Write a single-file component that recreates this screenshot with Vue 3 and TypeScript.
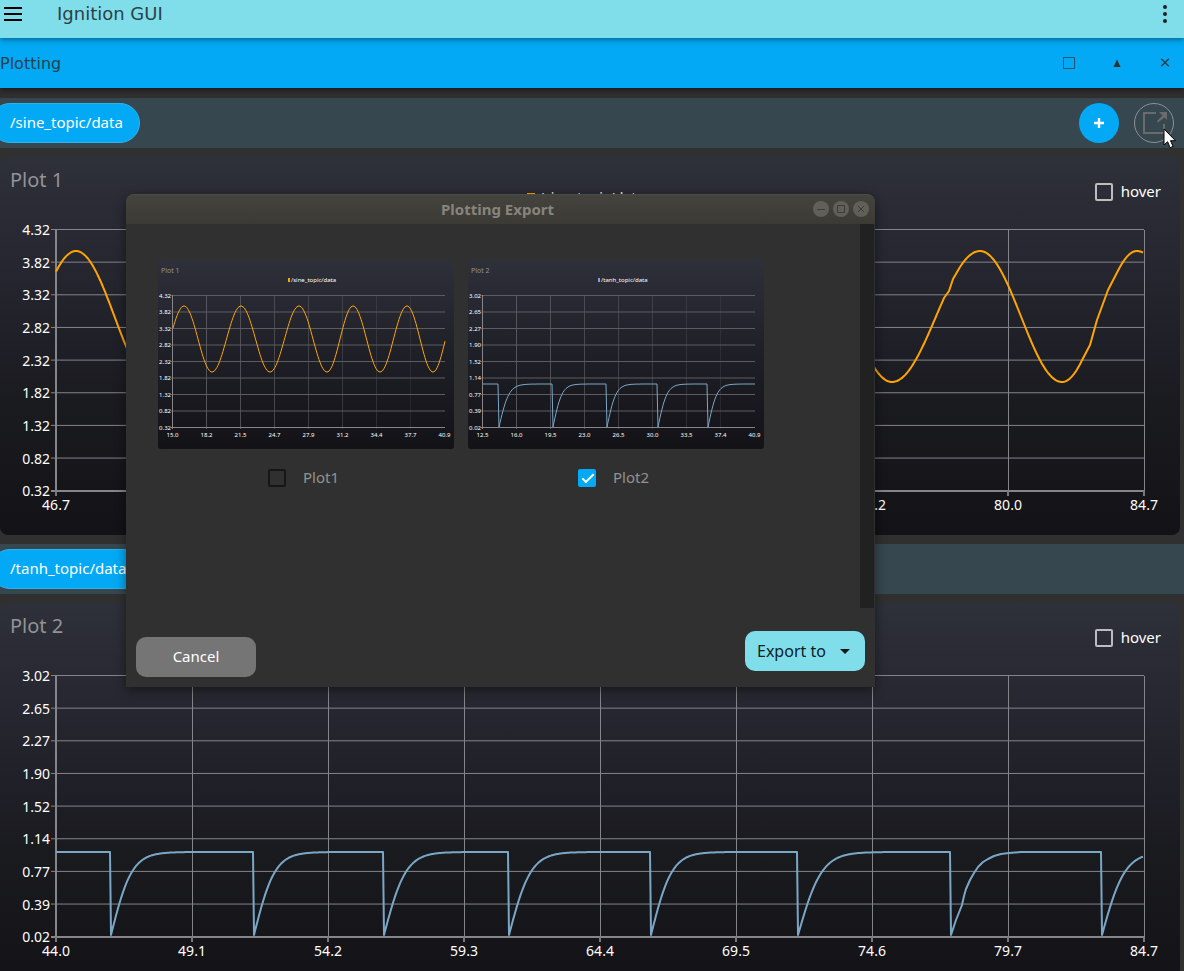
<script setup lang="ts">
import { ref } from 'vue'

type Point = [number, number]

interface Frame {
  width: number
  height: number
  left: number
  top: number
  stepX: number
  stepY: number
}

interface Chart {
  title: string
  topic: string
  color: string
  yLabels: string[]
  xLabels: string[]
  path: string
}

const linear = (pts: Point[]): string =>
  pts.map(([x, y], i) => `${i ? 'L' : 'M'}${x.toFixed(1)} ${y.toFixed(1)}`).join(' ')

/** Sine samples between alternating extremes, starting with a peak. */
function wave(extremes: number[], high: number, low: number, from: number, to: number): Point[] {
  const mid = (high + low) / 2
  const amp = (low - high) / 2
  const out: Point[] = []
  for (let x = from; x <= to; x++) {
    let i = 0
    while (i < extremes.length - 2 && x > extremes[i + 1]) i++
    const t = (x - extremes[i]) / (extremes[i + 1] - extremes[i])
    const sign = i % 2 ? -1 : 1
    out.push([x, mid - sign * amp * Math.cos(Math.PI * t)])
  }
  return out
}

interface Drop {
  x: number
  k: number
  samples?: Point[]
}

/** Repeated tanh ramps that fall back to zero at each drop. */
function ramps(drops: Drop[], from: number, to: number, high: number, low: number): Point[] {
  const out: Point[] = [[from, high]]
  drops.forEach((drop, i) => {
    const end = i + 1 < drops.length ? drops[i + 1].x - 1 : to
    out.push([drop.x - 1, high])
    if (drop.samples) {
      out.push(...drop.samples.map(([dx, y]): Point => [drop.x + dx, y]))
      return
    }
    for (let dx = 0; drop.x + dx <= end && dx < drop.k * 4; dx++) {
      out.push([drop.x + dx, low - (low - high) * Math.tanh(dx / drop.k)])
    }
    if (end - drop.x > drop.k * 4) out.push([end, high])
  })
  return out
}

const mainFrame: Frame = { width: 1180, height: 318, left: 56, top: 13, stepX: 136, stepY: 32.65 }
const thumbFrame: Frame = { width: 296, height: 190, left: 14.5, top: 36.5, stepX: 34, stepY: 16.5 }

const extremes = [76, 153, 243, 333, 423, 513, 603, 700, 810, 892, 980, 1062, 1137, 1220]
const sine = (from: number, to: number): Point[] => wave(extremes, 34, 165, from, to)
const sineSamples: Point[] = [
  ...sine(56, 944), [949, 74], [953, 62], ...sine(960, 1082),
  [1090, 128], [1097, 103], [1108, 73], ...sine(1119, 1143),
]

const sineLabels = ['4.32', '3.82', '3.32', '2.82', '2.32', '1.82', '1.32', '0.82', '0.32']
const tanhLabels = ['3.02', '2.65', '2.27', '1.90', '1.52', '1.14', '0.77', '0.39', '0.02']

const charts: Chart[] = [
  {
    title: 'Plot 1',
    topic: '/sine_topic/data',
    color: '#ffa500',
    yLabels: sineLabels,
    xLabels: ['46.7', '51.5', '56.2', '61.0', '65.7', '70.5', '75.2', '80.0', '84.7'],
    path: linear(sineSamples),
  },
  {
    title: 'Plot 2',
    topic: '/tanh_topic/data',
    color: '#7ba7c7',
    yLabels: tanhLabels,
    xLabels: ['44.0', '49.1', '54.2', '59.3', '64.4', '69.5', '74.6', '79.7', '84.7'],
    path: linear(
      ramps(
        [
          { x: 111, k: 21 },
          { x: 254, k: 21 },
          { x: 384, k: 22 },
          { x: 509, k: 22 },
          { x: 651, k: 21 },
          { x: 798, k: 24 },
          {
            x: 951,
            k: 24,
            samples: [[0, 272], [5, 257], [11, 242], [13, 233], [15, 226], [19, 217], [23, 210], [27, 204], [32, 199], [37, 196], [43, 193], [50, 191], [58, 190], [70, 189], [83, 189]],
          },
          { x: 1102, k: 23 },
        ],
        56, 1143, 189, 272,
      ),
    ),
  },
]

const previews: Chart[] = [
  {
    ...charts[0],
    xLabels: ['15.0', '18.2', '21.5', '24.7', '27.9', '31.2', '34.4', '37.7', '40.9'],
    path: linear(wave([26, 54, 83, 112, 141, 169, 195, 222, 249, 275, 300], 47, 113, 15, 287)),
  },
  {
    ...charts[1],
    xLabels: ['12.5', '16.0', '19.5', '23.0', '26.5', '30.0', '33.5', '37.4', '40.9'],
    path: linear(
      ramps([{ x: 31, k: 10 }, { x: 85, k: 9 }, { x: 139, k: 9 }, { x: 190, k: 9 }, { x: 240, k: 9 }], 15, 287, 125, 168),
    ),
  },
]

const nine = [0, 1, 2, 3, 4, 5, 6, 7, 8]
const hover = ref([false, false])
const selected = ref([false, true])
const format = ref('')
</script>

<template>
  <div class="app">
    <header class="app-bar">
      <button class="icon-button menu" aria-label="Menu">
        <svg width="18" height="14" viewBox="0 0 18 14"><path d="M0 1h18M0 7h18M0 13h18" stroke="#000" stroke-width="2" /></svg>
      </button>
      <h1>Ignition GUI</h1>
      <button class="icon-button more" aria-label="More options">
        <svg width="4" height="18" viewBox="0 0 4 18" fill="#212121"><circle cx="2" cy="2" r="2" /><circle cx="2" cy="9" r="2" /><circle cx="2" cy="16" r="2" /></svg>
      </button>
    </header>

    <section class="plugin-bar">
      <h2>Plotting</h2>
      <button class="icon-button" aria-label="Float">
        <svg width="12" height="12" viewBox="0 0 12 12"><rect x=".5" y=".5" width="11" height="11" fill="none" stroke="#1c5474" /></svg>
      </button>
      <button class="icon-button" aria-label="Collapse">
        <svg width="12" height="12" viewBox="0 0 12 12"><path d="M6 2.5 9.5 10h-7z" fill="#303030" /></svg>
      </button>
      <button class="icon-button" aria-label="Close">
        <svg width="12" height="12" viewBox="0 0 12 12"><path d="m2.200 1.700 7.600 7.600m0-7.600L2.200 9.300" stroke="#25404e" stroke-width="1.500" /></svg>
      </button>
    </section>

    <main>
      <template v-for="(chart, n) in charts" :key="chart.title">
        <div class="topic-bar">
          <button class="pill">{{ chart.topic }}</button>
          <template v-if="n === 0">
            <button class="round add" aria-label="Add plot">
              <svg width="10" height="10" viewBox="0 0 10 10"><path d="M5 0v10M0 5h10" stroke="#fff" stroke-width="2.400" /></svg>
            </button>
            <button class="round export" aria-label="Export plots">
              <svg width="24" height="24" viewBox="0 0 24 24">
                <path d="M14 2H2v20h20v-9" fill="none" stroke="#6b6b6b" stroke-width="2" />
                <path d="M25 1v8l-2.500-2.500-6.500 5-1-1.500 5.500-5.500L17 1z" fill="#6b6b6b" />
              </svg>
            </button>
          </template>
        </div>

        <article class="card">
          <div class="card-head">
            <h3>{{ chart.title }}</h3>
            <span class="legend"><svg width="8" height="8"><rect width="8" height="8" :fill="chart.color" /></svg>{{ chart.topic }}</span>
            <label class="hover"><input v-model="hover[n]" type="checkbox" /><span class="caption">hover</span></label>
          </div>
          <svg class="chart" :viewBox="`0 0 ${mainFrame.width} ${mainFrame.height}`" role="img" :aria-label="chart.title">
            <g stroke="#84858a">
              <line v-for="i in nine" :key="'h' + i" x1="51" x2="1144" :y1="mainFrame.top - .5 + i * mainFrame.stepY" :y2="mainFrame.top - .5 + i * mainFrame.stepY" />
              <line v-for="i in nine" :key="'v' + i" y1="13" y2="279" :x1="mainFrame.left + i * mainFrame.stepX + .5" :x2="mainFrame.left + i * mainFrame.stepX + .5" />
            </g>
            <path d="M56 12v267M51 274h1094" stroke="#85868a" stroke-width="2" fill="none" />
            <path v-for="i in nine" :key="'t' + i" :d="`M${mainFrame.left + i * mainFrame.stepX} 274v5`" stroke="#77787c" stroke-width="2" />
            <g fill="#fff" class="axis">
              <text v-for="(t, i) in chart.yLabels" :key="'y' + i" x="50" :y="18 + i * mainFrame.stepY" text-anchor="end">{{ t }}</text>
              <text v-for="(t, i) in chart.xLabels" :key="'x' + i" :x="mainFrame.left + i * mainFrame.stepX" y="293" text-anchor="middle">{{ t }}</text>
            </g>
            <path :d="chart.path" fill="none" :stroke="chart.color" stroke-width="2" stroke-linejoin="round" />
          </svg>
        </article>
      </template>
    </main>

    <div class="dialog" role="dialog" aria-label="Plotting Export">
      <div class="title-bar">
        <h2>Plotting Export</h2>
        <div class="window-buttons">
          <button aria-label="Minimize"><svg width="16" height="16" viewBox="0 0 16 16"><path d="M4 8.500h8" /></svg></button>
          <button aria-label="Maximize"><svg width="16" height="16" viewBox="0 0 16 16"><path d="M4.500 4.500h7v7h-7z" /></svg></button>
          <button aria-label="Close"><svg width="16" height="16" viewBox="0 0 16 16"><path d="m5 5 6 6m0-6-6 6" /></svg></button>
        </div>
      </div>
      <div class="dialog-body">
        <div class="previews">
          <div v-for="(p, n) in previews" :key="p.title" class="preview">
            <svg class="thumb" :viewBox="`0 0 ${thumbFrame.width} ${thumbFrame.height}`" role="img" :aria-label="p.title">
              <defs>
                <linearGradient :id="'shade' + n" x1="0" y1="0" x2="0" y2="1">
                  <stop offset="0" stop-color="#2e303a" />
                  <stop offset=".5" stop-color="#1f1f27" />
                  <stop offset="1" stop-color="#121217" />
                </linearGradient>
              </defs>
              <rect width="296" height="190" rx="3" :fill="`url(#shade${n})`" />
              <text x="3" y="14" class="thumb-title">{{ p.title }}</text>
              <rect x="130" y="19" width="2" height="4" :fill="p.color" />
              <text x="133" y="23" class="thumb-text">{{ p.topic }}</text>
              <g stroke="#5c5d62">
                <line v-for="i in nine" :key="'h' + i" x1="13" x2="287" :y1="thumbFrame.top + i * thumbFrame.stepY" :y2="thumbFrame.top + i * thumbFrame.stepY" />
                <line v-for="i in nine.slice(0, 8)" :key="'v' + i" y1="36" y2="170" :x1="thumbFrame.left + i * thumbFrame.stepX" :x2="thumbFrame.left + i * thumbFrame.stepX" :opacity="1 - i * .11" />
              </g>
              <path d="M14.5 36v134M13 168.500h274" stroke="#85868a" fill="none" />
              <text v-for="(t, i) in p.yLabels" :key="'y' + i" x="13" :y="38.5 + i * thumbFrame.stepY" text-anchor="end" class="thumb-text">{{ t }}</text>
              <text v-for="(t, i) in p.xLabels" :key="'x' + i" :x="thumbFrame.left + i * thumbFrame.stepX" y="178" text-anchor="middle" class="thumb-text">{{ t }}</text>
              <path :d="p.path" fill="none" :stroke="p.color" />
            </svg>
            <label class="choice"><input v-model="selected[n]" type="checkbox" /><span class="caption">Plot{{ n + 1 }}</span></label>
          </div>
        </div>
        <div class="scroll-track"></div>
      </div>
      <div class="dialog-foot">
        <button class="cancel">Cancel</button>
        <div class="export-to">
          <select v-model="format" aria-label="Export to">
            <option value="">Export to</option>
            <option value="csv">CSV</option>
            <option value="pdf">PDF</option>
          </select>
          <svg width="10" height="5" viewBox="0 0 10 5"><path d="M0 0h10L5 5z" fill="#0d1618" /></svg>
        </div>
      </div>
    </div>

    <svg class="pointer" width="14" height="22" viewBox="0 0 14 22">
      <path d="M1 1v16l3.600-3.300 2.500 6 3-1.300-2.600-5.700h5z" fill="#fff" stroke="#000" />
    </svg>
  </div>
</template>

<style>
html,
body {
  background: #303030;
}
</style>

<style scoped>
.app {
  position: relative;
  height: 100vh;
  overflow: hidden;
  background: #303030;
  color: #fff;
  font-family: "Noto Sans", "Open Sans", sans-serif;
  font-size: 15px;
}
.app *,
.app *::after {
  box-sizing: border-box;
}
h1,
h2,
h3 {
  margin: 0;
  font-weight: 400;
}
button,
select {
  margin: 0;
  padding: 0;
  border: 0;
  background: none;
  color: inherit;
  font: inherit;
}
svg {
  display: block;
}
.app-bar {
  position: relative;
  z-index: 2;
  display: flex;
  align-items: center;
  height: 38px;
  padding: 0 17px 10px 4px;
  background: #80deea;
  box-shadow: 0 1px 6px rgba(0, 0, 0, 0.5);
}
.app-bar h1 {
  flex: 1;
  margin-left: 35px;
  color: #2c4144;
  font: 18px/28px "DejaVu Sans", sans-serif;
}
.plugin-bar {
  position: relative;
  z-index: 1;
  display: flex;
  align-items: center;
  gap: 36px;
  height: 50px;
  padding-right: 13px;
  background: #03a9f4;
  box-shadow: 0 2px 6px rgba(0, 0, 0, 0.5);
}
.plugin-bar h2 {
  flex: 1;
  padding-top: 2px;
  color: #26414f;
  font: 16px/24px "DejaVu Sans", sans-serif;
}
main {
  padding-top: 10px;
}
.topic-bar {
  display: flex;
  align-items: center;
  gap: 15px;
  height: 50px;
  padding-right: 10px;
  background: #37474f;
}
.pill {
  height: 40px;
  margin: 0 auto 0 -10px;
  padding: 0 16px 2px 19px;
  border: 1px solid #2fb3ec;
  border-radius: 20px;
  background: #03a9f4;
}
.round {
  display: flex;
  align-items: center;
  justify-content: center;
  width: 40px;
  height: 40px;
  border-radius: 50%;
}
.add {
  background: #03a9f4;
}
.export {
  border: 1px solid #8a9296;
}
.export svg {
  overflow: visible;
}
.card {
  margin: 9px 4px 9px 0;
  border-radius: 8px;
  background: linear-gradient(#2e303a, #1f1f27 50%, #1a1b1f 65%, #121217);
}
.card-head {
  display: grid;
  grid-template-columns: 1fr auto 1fr;
  height: 60px;
  padding: 9px 19px 0 10px;
}
.card-head h3 {
  color: #929397;
  font-size: 20px;
  line-height: 28px;
}
.legend {
  display: flex;
  align-items: center;
  gap: 4px;
  padding-top: 10px;
  font-size: 14px;
}
.hover {
  display: flex;
  align-items: center;
  justify-self: end;
  gap: 8px;
  height: 52px;
}
.caption {
  padding-bottom: 2px;
}
input {
  position: relative;
  width: 18px;
  height: 18px;
  margin: 0;
  border: 2px solid #bdbdbd;
  border-radius: 2px;
  appearance: none;
}
input:checked {
  border-color: #03a9f4;
  background: #03a9f4;
}
input:checked::after {
  content: "";
  position: absolute;
  top: 0;
  left: 5px;
  width: 6px;
  height: 12px;
  border: solid #fff;
  border-width: 0 2px 2px 0;
  transform: rotate(45deg);
}
.chart {
  width: 100%;
  height: auto;
}
.axis {
  font-size: 14px;
}
.dialog {
  position: absolute;
  z-index: 3;
  top: 194px;
  left: 126px;
  width: 749px;
  border-radius: 8px 8px 0 0;
  background: #303030;
  box-shadow: 0 3px 12px rgba(0, 0, 0, 0.45);
}
.title-bar {
  display: grid;
  grid-template-columns: 1fr auto 1fr;
  align-items: center;
  height: 30px;
  padding: 0 6px 2px 0;
  border-top: 1px solid #4c4b45;
  border-radius: 8px 8px 0 0;
  background: linear-gradient(#44433d, #3b3a35);
}
.title-bar h2 {
  grid-column: 2;
  color: #87847c;
  font-size: 15px;
  font-weight: 700;
}
.window-buttons {
  display: flex;
  justify-content: flex-end;
  gap: 4px;
}
.window-buttons button {
  border-radius: 50%;
  background: #605f58;
}
.window-buttons path {
  fill: none;
  stroke: #3c3b36;
}
.dialog-body {
  display: flex;
  justify-content: space-between;
  min-height: 384px;
  padding-right: 1px;
}
.previews {
  display: flex;
  gap: 14px;
  padding: 35px 0 0 32px;
}
.preview {
  width: 296px;
}
.thumb {
  width: 100%;
  height: auto;
}
.thumb-title {
  fill: #929397;
  font-size: 7px;
}
.thumb-text {
  fill: #fff;
  font-size: 6px;
}
.choice {
  display: flex;
  align-items: center;
  justify-content: center;
  gap: 17px;
  height: 58px;
  padding-right: 5px;
  color: #929292;
}
.choice input:not(:checked) {
  border-color: #161616;
}
.scroll-track {
  width: 14px;
  background: #212121;
}
.dialog-foot {
  display: flex;
  align-items: flex-end;
  justify-content: space-between;
  height: 79px;
  padding: 0 10px 10px;
}
.cancel {
  width: 120px;
  height: 40px;
  padding-bottom: 2px;
  border-radius: 10px;
  background: #757575;
}
.export-to {
  position: relative;
  margin-bottom: 6px;
  color: #102024;
}
.export-to select {
  width: 120px;
  height: 40px;
  padding-left: 12px;
  border-radius: 10px;
  background: #80deea;
  font-size: 16px;
  appearance: none;
}
.export-to svg {
  position: absolute;
  top: 18px;
  right: 15px;
  pointer-events: none;
}
.pointer {
  position: absolute;
  z-index: 4;
  top: 128px;
  left: 1163px;
}
</style>
